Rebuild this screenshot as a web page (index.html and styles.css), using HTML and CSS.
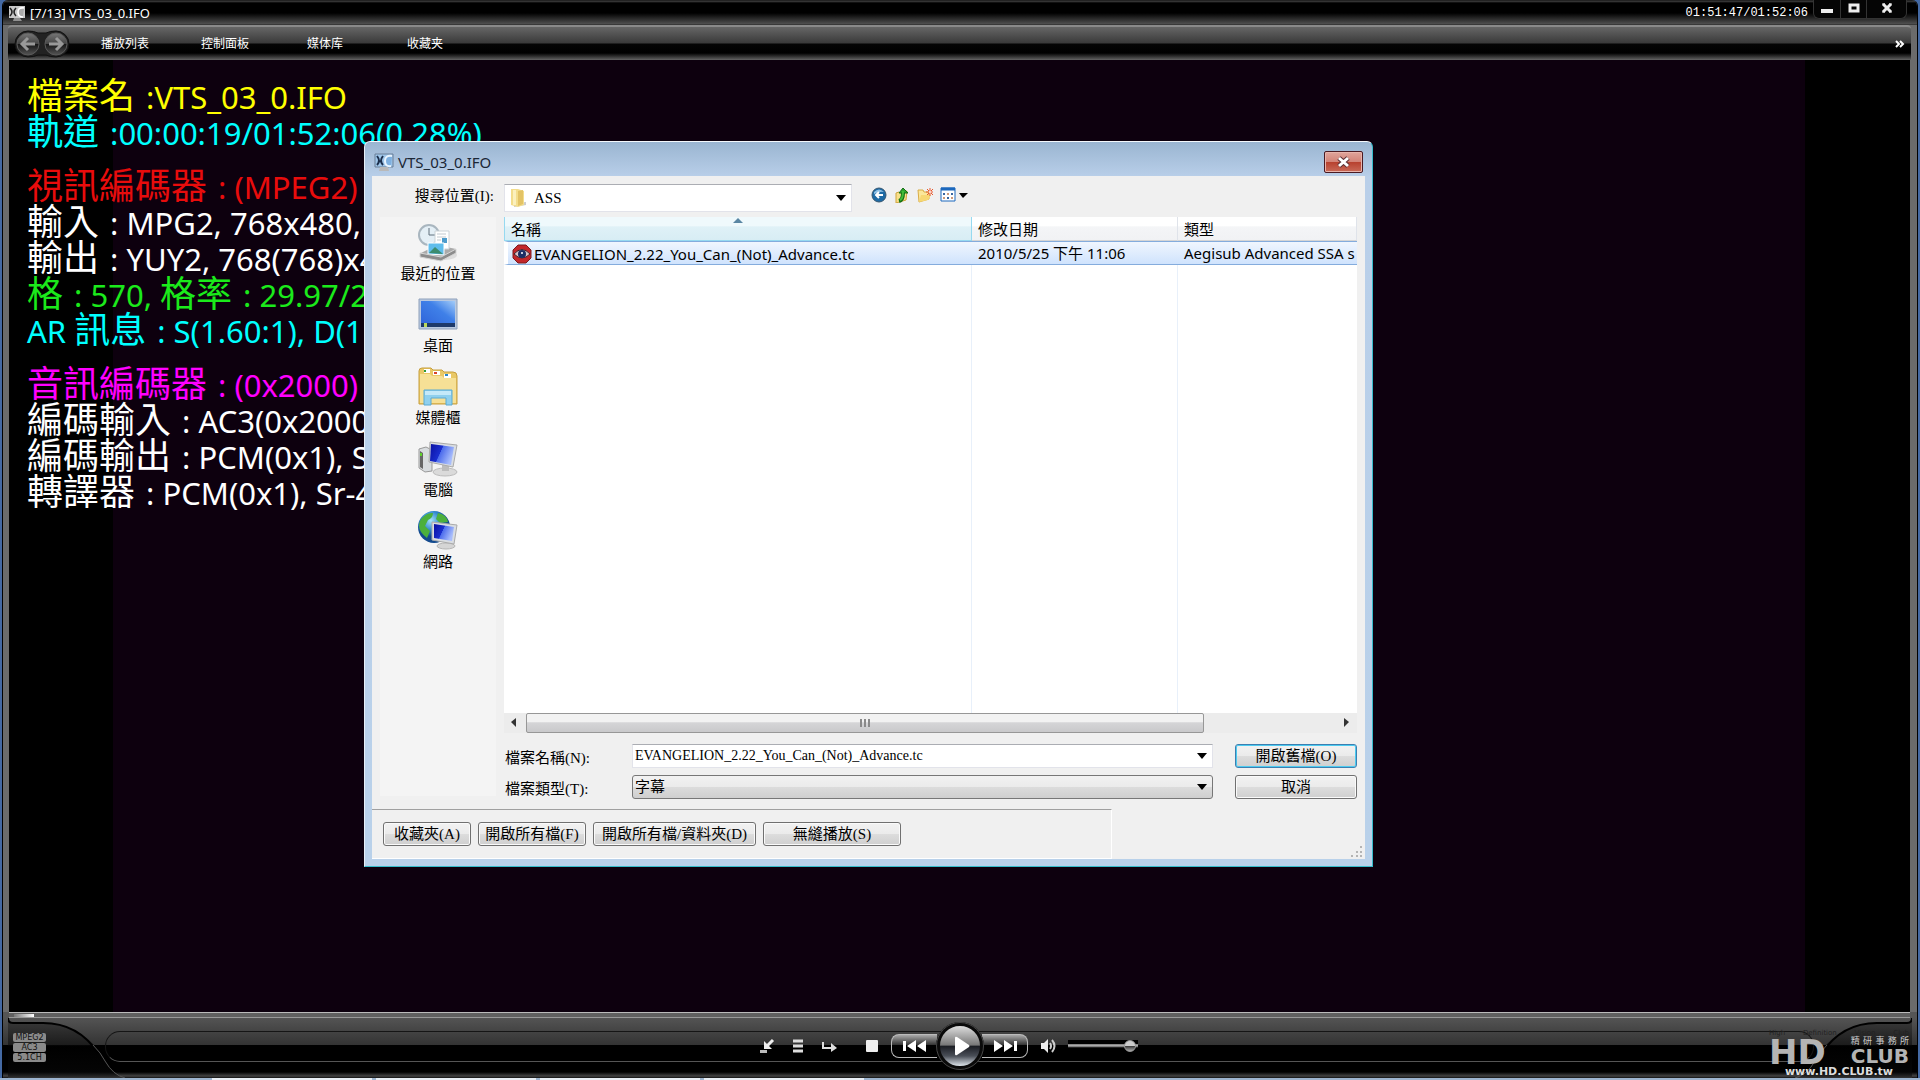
FILE: index.html
```html
<!DOCTYPE html>
<html lang="zh-Hant">
<head>
    <meta charset="UTF-8">
    <meta name="viewport" content="width=device-width, initial-scale=1.0">
    <title>VTS_03_0.IFO</title>
    <link rel="stylesheet" href="styles.css">
</head>
<body>
    <div class="player">
        <header class="titlebar">
            <svg class="app-icon" width="16" height="16" viewBox="0 0 16 16">
                <path d="M0 1h16v12H0z" fill="#c9c9c9"/>
                <path d="M5 13h6l2 3H4z" fill="#909090"/>
                <path d="M1 3q4 4 0 8M7 3q-4 4 0 8" stroke="#222" stroke-width="1.6" fill="none"/>
                <path d="M15 3q-6-1-6 4t5 5" stroke="#fff" stroke-width="1.6" fill="#aaa"/>
            </svg>
            <h1>[7/13] VTS_03_0.IFO</h1>
            <span class="clock">01:51:47/01:52:06</span>
            <div class="window-buttons">
                <button type="button" aria-label="Minimize">
                    <svg width="12" height="12" viewBox="0 0 12 12"><path d="M0 6h12v4H0z" fill="#eee"/></svg>
                </button>
                <button type="button" aria-label="Maximize">
                    <svg width="12" height="12" viewBox="0 0 12 12"><path d="M2 2h8v6H2z" fill="none" stroke="#eee" stroke-width="3"/></svg>
                </button>
                <button type="button" class="wide" aria-label="Close">
                    <svg width="12" height="12" viewBox="0 0 12 12"><path d="M2 1l8 8M10 1l-8 8" stroke="#eee" stroke-width="3"/><path d="M1 1h3M8 1h3M1 9h3M8 9h3" stroke="#eee" stroke-width="1"/></svg>
                </button>
            </div>
        </header>

        <nav class="menubar">
            <div class="history">
                <svg width="56" height="28" viewBox="0 0 56 28">
                    <defs>
                        <linearGradient id="ball" x1="0" y1="0" x2="0" y2="1">
                            <stop offset="0" stop-color="#777"/>
                            <stop offset=".5" stop-color="#444"/>
                            <stop offset=".51" stop-color="#161616"/>
                            <stop offset="1" stop-color="#555"/>
                        </linearGradient>
                    </defs>
                    <path d="M14 1q6 0 10 2h8q4-2 10-2a13 13 0 0 1 0 26q-6 0-10-2h-8q-4 2-10 2a13 13 0 0 1 0-26z" fill="#222" stroke="#111"/>
                    <circle cx="14" cy="14" r="11" fill="url(#ball)" stroke="#5a5a5a"/>
                    <circle cx="42" cy="14" r="11" fill="url(#ball)" stroke="#5a5a5a"/>
                    <path d="M21 14H9M14 8l-6 6 6 6M35 14h12M42 8l6 6-6 6" stroke="#999" stroke-width="3" fill="none"/>
                </svg>
            </div>
            <a href="#">播放列表</a>
            <a href="#">控制面板</a>
            <a href="#">媒体库</a>
            <a href="#">收藏夹</a>
            <svg class="more" width="10" height="8" viewBox="0 0 10 8"><path d="M1 1l3 3-3 3M5 1l3 3-3 3" stroke="#fff" stroke-width="2" fill="none"/></svg>
        </nav>

        <main class="video">
            <div class="osd">
                <p class="yellow"><span>檔案名</span> :VTS_03_0.IFO</p>
                <p class="cyan"><span>軌道</span> :00:00:19/01:52:06(0.28%)</p>
                <p class="red gap"><span>視訊編碼器</span> : (MPEG2) M</p>
                <p><span>輸入</span> : MPG2, 768x480,</p>
                <p><span>輸出</span> : YUY2, 768(768)x4</p>
                <p class="green"><span>格</span> : 570, <span>格率</span> : 29.97/29</p>
                <p class="cyan">AR <span>訊息</span> : S(1.60:1), D(1.</p>
                <p class="magenta gap"><span>音訊編碼器</span> : (0x2000)</p>
                <p><span>編碼輸入</span> : AC3(0x2000)</p>
                <p><span>編碼輸出</span> : PCM(0x1), Sr</p>
                <p><span>轉譯器</span> : PCM(0x1), Sr-48</p>
            </div>
        </main>

        <footer class="controls">
            <div class="seek"><div class="seek-thumb"></div></div>
            <div class="groove"></div>
            <svg class="corner" width="130" height="60" viewBox="0 0 130 60">
                <defs>
                    <linearGradient id="shade" x1="0" y1="0" x2="0" y2="1">
                        <stop offset="0" stop-color="#3c3c3c"/>
                        <stop offset=".45" stop-color="#1c1c1c"/>
                        <stop offset=".46" stop-color="#000"/>
                        <stop offset=".9" stop-color="#050505"/>
                        <stop offset="1" stop-color="#333"/>
                    </linearGradient>
                </defs>
                <path d="M0 0q0 5 5 5h30q35 0 58 30 12 22 24 25H0z" fill="url(#shade)"/>
                <path d="M0 0q0 5 5 5h30q35 0 55 30" fill="none" stroke="#000" stroke-width="2"/>
                <path d="M85 27q8 8 12 16 8 14 20 17" fill="none" stroke="#555"/>
            </svg>
            <svg class="corner right" width="130" height="60" viewBox="0 0 130 60">
                <path d="M0 0q0 5 5 5h30q35 0 58 30 12 22 24 25H0z" fill="url(#shade)"/>
                <path d="M0 0q0 5 5 5h30q35 0 55 30" fill="none" stroke="#000" stroke-width="2"/>
                <path d="M85 27q8 8 12 16 8 14 20 17" fill="none" stroke="#555"/>
            </svg>
            <ul class="codec">
                <li>MPEG2</li>
                <li>AC3</li>
                <li>5.1CH</li>
            </ul>
            <div class="transport">
                <div class="side left">
                    <button type="button" aria-label="Shrink"><svg width="16" height="16" viewBox="0 0 16 16"><path d="M14 2L8 8" stroke="#eee" stroke-width="3"/><path d="M5 3v8h8z" fill="#eee"/><path d="M1 12h7v3H1z" fill="#bbb"/></svg></button>
                    <button type="button" aria-label="Playlist"><svg width="16" height="16" viewBox="0 0 16 16"><path d="M3 3h10M3 8h10M3 13h10" stroke="#ddd" stroke-width="3"/></svg></button>
                    <button type="button" class="spaced" aria-label="Next in order"><svg width="16" height="16" viewBox="0 0 16 16"><path d="M2 4v6h9" stroke="#ddd" stroke-width="2" fill="none"/><path d="M10 5l6 5-6 4z" fill="#ddd"/></svg></button>
                    <button type="button" aria-label="Stop"><svg width="16" height="16" viewBox="0 0 16 16"><rect x="2" y="2" width="12" height="12" rx="1" fill="#eee"/></svg></button>
                    <button type="button" class="skip prev" aria-label="Previous"><svg width="24" height="12" viewBox="0 0 24 12"><path d="M0 1h3v10H0zM13 0v12L4 6zM23 0v12l-9-6z" fill="#fff"/></svg></button>
                </div>
                <button type="button" class="play" aria-label="Play"><svg width="16" height="20" viewBox="0 0 16 20"><path d="M1 2q0-2 2-1l12 8q1 1 0 2L3 19q-2 1-2-1z" fill="#fff"/></svg></button>
                <div class="side">
                    <button type="button" class="skip next" aria-label="Next"><svg width="24" height="12" viewBox="0 0 24 12"><path d="M21 1h3v10h-3zM11 0v12l9-6zM1 0v12l9-6z" fill="#fff"/></svg></button>
                    <button type="button" aria-label="Mute"><svg width="16" height="16" viewBox="0 0 16 16"><path d="M1 5h3l4-4v14l-4-4H1z" fill="#eee"/><path d="M10 5q2 3 0 6M12 2q5 6 0 12" stroke="#ccc" stroke-width="2" fill="none"/></svg></button>
                    <input class="volume" type="range" min="0" max="100" value="97" aria-label="Volume">
                </div>
            </div>
            <div class="brand">
                <div class="tagline"><span>High</span><span>Definition</span><span>Vision</span><span>Club</span></div>
                <div class="logo">
                    <strong>HD</strong>
                    <div>
                        <div class="office"><span>精</span><span>研</span><span>事</span><span>務</span><span>所</span></div>
                        <b>CLUB</b>
                    </div>
                </div>
                <div class="url">www.HD.CLUB.tw</div>
            </div>
        </footer>
    </div>
    <div class="taskbar"><i></i><i></i><i></i><i></i></div>

    <form class="dialog" action="#">
        <div class="dialog-title">
            <svg width="20" height="20" viewBox="0 0 20 20">
                <path d="M1 2h18v13H1z" fill="#9fc6ea" stroke="#6b7f96"/>
                <path d="M6 15h8l1 4H5z" fill="#b9b9b9"/>
                <path d="M3 4q4 5 0 9M9 4q-4 5 0 9" stroke="#1c2f4c" stroke-width="2" fill="none"/>
                <path d="M18 4q-7-1-7 5t6 5" stroke="#e8f4ff" stroke-width="2" fill="#7eb0e0"/>
            </svg>
            <h2>VTS_03_0.IFO</h2>
            <button type="button" class="close" aria-label="Close"><svg width="16" height="14" viewBox="0 0 16 14"><path d="M3 3l9 8M12 3l-9 8" stroke="#5a3036" stroke-width="5"/><path d="M3 3l9 8M12 3l-9 8" stroke="#fff" stroke-width="3"/></svg></button>
        </div>
        <div class="dialog-body">
            <div class="lookin">
                <label for="place">搜尋位置(I):</label>
                <div class="combo">
                    <svg width="18" height="20" viewBox="0 0 18 20"><path d="M4 15l12-1v3l-12 2z" fill="#ccc"/><path d="M1 1h7l6 2v14l-6 2-7-2z" fill="#f3dd8c"/><path d="M8 3l5-1v14l-5 2z" fill="#e3c366"/><path d="M3 2h3v15H3z" fill="#fbf0bd"/></svg>
                    <select id="place"><option>ASS</option></select>
                    <svg class="drop" width="10" height="6" viewBox="0 0 10 6"><path d="M0 0h10L5 6z"/></svg>
                </div>
                <div class="tools">
                    <button type="button" aria-label="Back"><svg width="16" height="16" viewBox="0 0 16 16"><circle cx="8" cy="8" r="7" fill="#1d6aa5" stroke="#36566f"/><path d="M3 5q5-5 10 0-4-1-10 2z" fill="#8fc0e4"/><path d="M12 8H5M8 5L5 8l3 3" stroke="#fff" stroke-width="2" fill="none"/></svg></button>
                    <button type="button" aria-label="Up one level"><svg width="16" height="16" viewBox="0 0 16 16"><path d="M2 6l3-1 1 1 7-2-1 9-10 3z" fill="#f8e08a" stroke="#d0a43c"/><path d="M5 14q4-1 4-8" stroke="#157015" stroke-width="4" fill="none"/><path d="M5 6l4-5 5 5z" fill="#2fa52f" stroke="#157015"/><path d="M6 13q3-1 3-9" stroke="#43bd3a" stroke-width="2" fill="none"/></svg></button>
                    <button type="button" aria-label="New folder"><svg width="16" height="16" viewBox="0 0 16 16"><path d="M1 3h5l1 2h5v7L2 15z" fill="#fbe79a" stroke="#d9ac45"/><path d="M4 8h10l-3 5-9 2z" fill="#f7d873"/><path d="M13 1v8M9 5h7M10 2l6 6M16 2l-6 6" stroke="#e8562c"/><circle cx="13" cy="5" r="1" fill="#fff"/></svg></button>
                    <button type="button" aria-label="Views"><svg width="28" height="16" viewBox="0 0 28 16"><path d="M1 1h14v13H1z" fill="#fff" stroke="#1c68bd"/><path d="M1 2h14" stroke="#1c68bd" stroke-width="3"/><path d="M3 7h2M11 7h2M7 11h2" stroke="#3a66a0" stroke-width="2"/><path d="M7 7h2M3 11h2M11 11h2" stroke="#cf9a7a" stroke-width="2"/><path d="M19 6h9l-5 5z" fill="#000"/></svg></button>
                </div>
            </div>

            <div class="columns">
                <ul class="places">
                    <li>
                        <svg width="40" height="40" viewBox="0 0 40 40"><ellipse cx="27" cy="33" rx="12" ry="5" fill="#ddd"/><circle cx="11" cy="13" r="10" fill="#e4eff6" stroke="#a9b6bf" stroke-width="2"/><path d="M11 6v7h6" stroke="#60707c" fill="none"/><path d="M3 31l16-8 19 4-15 10z" fill="#aaa"/><path d="M17 9h14v18H17z" fill="#fff" stroke="#cbd3d8"/><path d="M19 12h9M19 15h9M19 18h4" stroke="#c1c9cf"/><path d="M24 16h5v5h-5z" fill="#4d9ccc"/><path d="M10 21h16v12l-16-1z" fill="#5fbdec" stroke="#fff"/><path d="M11 31l6-6 8 7z" fill="#3c8c6e"/><path d="M2 31l21 4 15-8v4l-15 8-21-4z" fill="#8c8c8c" stroke="#d5d5d5"/></svg>
                        <span>最近的位置</span>
                    </li>
                    <li>
                        <svg width="40" height="40" viewBox="0 0 40 40"><defs><linearGradient id="desk" x1="0" y1="1" x2="1" y2="0"><stop offset="0" stop-color="#2e62d8"/><stop offset=".6" stop-color="#3f80e8"/><stop offset="1" stop-color="#a3ccf8"/></linearGradient></defs><path d="M1 5h38v30H1z" fill="#b9c9e0" stroke="#8fa1bb"/><path d="M3 7h34v26H3z" fill="url(#desk)"/><path d="M3 29h34v4H3z" fill="#1e3a6a"/><path d="M6 29h3v4H6z" fill="#b9d85c"/></svg>
                        <span>桌面</span>
                    </li>
                    <li>
                        <svg width="40" height="40" viewBox="0 0 40 40"><path d="M1 5q0-3 3-3h9l2 2h9l2 2h9q4 0 4 4v28H1z" fill="#e9c866" stroke="#c79f3f"/><path d="M6 3h6v4H6zM15 5h7v4h-7zM26 8h7v4h-7z" fill="#fff"/><path d="M6 4h2v2H6z" fill="#2a9a3a"/><path d="M16 6h3v2h-3z" fill="#d9432a"/><path d="M27 8h3v2h-3z" fill="#2a86c9"/><path d="M2 8h10l2 2h10l2 2h12v25H2z" fill="#f6e096"/><path d="M6 24h28v15h-6v-7H13v7H6z" fill="#8fd0ee" stroke="#5aaad2"/><path d="M7 25h26v4H7z" fill="#c4e9f9"/></svg>
                        <span>媒體櫃</span>
                    </li>
                    <li>
                        <svg width="40" height="40" viewBox="0 0 40 40"><defs><linearGradient id="screen" x1="0" y1="0" x2="1" y2=".4"><stop offset="0" stop-color="#0a0fa0"/><stop offset=".5" stop-color="#1a2fd0"/><stop offset=".52" stop-color="#4c6cec"/><stop offset="1" stop-color="#a8bdfc"/></linearGradient></defs><path d="M1 11l7-2 6 3v21l-7 1-6-4z" fill="#d8dcdf" stroke="#999"/><path d="M2 13l3 2v16l-3-2z" fill="#666"/><path d="M2 15h2v3H2z" fill="#5fd02c"/><ellipse cx="27" cy="34" rx="12" ry="4" fill="#dadada" stroke="#bbb"/><path d="M24 27h7v6h-7z" fill="#bcbcbc"/><path d="M12 4l27 3-4 22-24-5z" fill="#d9dde2" stroke="#aaa"/><path d="M13 6l23 3-3 18-21-4z" fill="url(#screen)"/></svg>
                        <span>電腦</span>
                    </li>
                    <li>
                        <svg width="40" height="40" viewBox="0 0 40 40"><defs><radialGradient id="globe" cx=".4" cy=".3"><stop offset="0" stop-color="#a8e4fb"/><stop offset=".6" stop-color="#2f86cc"/><stop offset="1" stop-color="#134a8e"/></radialGradient></defs><circle cx="16" cy="17" r="16" fill="url(#globe)"/><path d="M3 9Q9 2 15 3q0 5-5 7l-3 6 5 5-3 7Q-3 19 3 9zM20 3q9 2 10 9l-8 1-4-4z" fill="#4cb03c"/><ellipse cx="28" cy="36" rx="9" ry="3" fill="#d5d5d5" stroke="#b5b5b5"/><path d="M14 12l25 3-3 19-22-4z" fill="#d9dde2" stroke="#aaa"/><path d="M16 14l20 3-2 14-18-3z" fill="url(#screen)"/></svg>
                        <span>網路</span>
                    </li>
                </ul>

                <div class="files">
                    <div class="list">
                        <table>
                            <thead>
                                <tr>
                                    <th class="sorted name">名稱</th>
                                    <th class="date">修改日期</th>
                                    <th>類型</th>
                                </tr>
                            </thead>
                            <tbody>
                                <tr>
                                    <td class="file"><svg width="20" height="20" viewBox="0 0 20 20"><path d="M6 1h8l5 5v8l-5 5H6l-5-5V6z" fill="#c3272b" stroke="#7a1c1e"/><path d="M2 10q8-9 16 0-8 8-16 0z" fill="#d8c4ca" stroke="#40232c"/><circle cx="10" cy="10" r="4" fill="#1c2f66"/><circle cx="10" cy="9" r="1" fill="#fff"/></svg><span>EVANGELION_2.22_You_Can_(Not)_Advance.tc</span></td>
                                    <td>2010/5/25 下午 11:06</td>
                                    <td>Aegisub Advanced SSA s</td>
                                </tr>
                            </tbody>
                        </table>
                    </div>
                    <div class="scrollbar">
                        <svg width="22" height="20" viewBox="0 0 22 20"><path d="M12 5v9l-5-5z" fill="#333"/></svg>
                        <div class="thumb"><i></i><i></i><i></i></div>
                        <svg width="22" height="20" viewBox="0 0 22 20"><path d="M9 5v9l5-5z" fill="#333"/></svg>
                    </div>
                    <div class="fields">
                        <label for="filename">檔案名稱(N):</label>
                        <div class="combo edit">
                            <input id="filename" type="text" value="EVANGELION_2.22_You_Can_(Not)_Advance.tc">
                            <svg class="drop" width="10" height="6" viewBox="0 0 10 6"><path d="M0 0h10L5 6z"/></svg>
                        </div>
                        <button type="submit" class="default">開啟舊檔(O)</button>
                        <label for="filetype">檔案類型(T):</label>
                        <div class="combo flat">
                            <select id="filetype"><option>字幕</option></select>
                            <svg class="drop" width="10" height="6" viewBox="0 0 10 6"><path d="M0 0h10L5 6z"/></svg>
                        </div>
                        <button type="button">取消</button>
                    </div>
                </div>
            </div>

            <div class="extra">
                <button type="button" class="b-fav">收藏夾(A)</button>
                <button type="button" class="b-all">開啟所有檔(F)</button>
                <button type="button" class="b-dir">開啟所有檔/資料夾(D)</button>
                <button type="button" class="b-gap">無縫播放(S)</button>
            </div>
            <svg class="grip" width="12" height="12" viewBox="0 0 12 12"><path d="M9 0h2v2H9zM5 5h2v2H5zM9 5h2v2H9zM0 9h2v2H0zM5 9h2v2H5zM9 9h2v2H9z" fill="#b4b4b4"/></svg>
        </div>
    </form>
</body>
</html>
```
FILE: styles.css
```css
* {
    box-sizing: border-box;
}

body, h1, h2, p, ul {
    margin: 0;
    padding: 0;
}

ul {
    list-style: none;
}

body {
    display: flex;
    flex-direction: column;
    height: 100vh;
    overflow: hidden;
    background-color: #4469a3;
    font-family: "Noto Sans", "Noto Sans CJK TC", sans-serif;
}

button {
    padding: 0;
    border: none;
    background: none;
    font: inherit;
    color: inherit;
}

svg {
    display: block;
    flex: none;
}

/* Player window */
.player {
    flex: 1;
    display: flex;
    flex-direction: column;
    min-height: 0;
    margin: 0 2px;
    border: solid #000;
    border-width: 0 1px;
    border-radius: 6px 6px 0 0;
    background-color: #6b6b6b;
    color: #fff;
    overflow: hidden;
}

.titlebar {
    display: flex;
    align-items: center;
    height: 25px;
    padding: 0 10px 0 6px;
    background: linear-gradient(#000 0, #444 1px, #000 3px, #000 13px, #505050 24px, #222 25px);
}

.titlebar h1 {
    flex: 1;
    margin-left: 5px;
    font-size: 13px;
    font-weight: normal;
}

.clock {
    margin-right: 5px;
    font: 12px "Liberation Mono", monospace;
}

.window-buttons {
    display: flex;
    align-self: flex-start;
    height: 19px;
    border: 1px solid #333;
    border-top: none;
    border-radius: 0 0 6px 6px;
    background-color: #050505;
}

.window-buttons button {
    display: flex;
    justify-content: center;
    align-items: center;
    width: 26px;
}

.window-buttons button + button {
    border-left: 1px solid #333;
}

.window-buttons .wide {
    width: 40px;
}

.menubar {
    display: flex;
    align-items: center;
    height: 35px;
    margin: 0 6px 0 5px;
    padding: 0 6px;
    border-top: 2px solid #8a8a8a;
    border-radius: 4px 4px 0 0;
    background: linear-gradient(#666 0, #3a3a3a 16px, #050505 17px, #000 26px, #555 32px, #666 33px);
    font-size: 12px;
}

.history {
    width: 61px;
}

.menubar a {
    width: 100px;
    padding-bottom: 2px;
    color: #fff;
    text-align: center;
    text-decoration: none;
    font-family: "Noto Sans CJK SC", sans-serif;
}

.more {
    margin-left: auto;
}

.video {
    flex: 1;
    min-height: 0;
    margin: 0 7px 0 6px;
    padding: 18px;
    background: linear-gradient(90deg, #000 104px, #0d000e 104px, #0d000e calc(100% - 105px), #000 calc(100% - 105px));
    overflow: hidden;
}

/* On screen media info */
.osd {
    font-size: 31px;
    line-height: 36px;
    white-space: nowrap;
}

.osd p {
    height: 36px;
}

.osd span {
    margin-right: 3px;
    font-size: 36px;
}

.osd .gap {
    margin-top: 18px;
}

.yellow { color: #ff0; }
.cyan { color: #0ff; }
.red { color: #e80c0c; }
.green { color: #1bea1b; }
.magenta { color: #f0f; }

/* Bottom control bar */
.controls {
    position: relative;
    height: 66px;
    background: linear-gradient(#555 5px, #333 33px, #000 33px, #000 60px, #444 64px, #111 66px);
}

.seek {
    height: 6px;
    margin: 0 7px 0 6px;
    padding: 1px 5px;
    border-top: 1px solid #bbb;
    border-bottom: 1px solid #999;
    background-color: #606060;
}

.seek-thumb {
    width: 20px;
    height: 3px;
    background: linear-gradient(90deg, #777, #fff);
}

.groove {
    height: 31px;
    margin: 13px 103px 0 102px;
    border: 1px solid #151515;
    border-bottom-color: #555;
    border-radius: 15px;
}

.corner {
    position: absolute;
    left: 5px;
    bottom: 0;
}

.corner.right {
    left: auto;
    right: 5px;
    transform: scaleX(-1);
}

.codec {
    position: absolute;
    left: 10px;
    top: 21px;
}

.codec li {
    width: 33px;
    height: 9px;
    margin-bottom: 1px;
    border-radius: 2px;
    background-color: #8a8a8a;
    color: #111;
    font: 8px/9px "DejaVu Sans", sans-serif;
    text-align: center;
}

.transport {
    position: absolute;
    left: 0;
    right: 0;
    top: 10px;
    display: grid;
    grid-template-columns: 1fr 48px 1fr;
    align-items: center;
}

.side {
    display: flex;
    align-items: center;
    gap: 12px;
}

.side.left {
    justify-content: flex-end;
    gap: 15px;
}

.spaced {
    margin-right: 12px;
}

.skip {
    display: flex;
    justify-content: center;
    align-items: center;
    width: 46px;
    height: 24px;
    margin-left: -2px;
    border: 1px solid #bbb;
    background: linear-gradient(#aaa, #333 45%, #000 46%);
}

.prev {
    margin: 0 -1px 0 -4px;
    border-right: none;
    border-radius: 8px 0 0 8px;
}

.next {
    border-left: none;
    border-radius: 0 8px 8px 0;
}

.play {
    display: flex;
    justify-content: center;
    align-items: center;
    z-index: 1;
    height: 48px;
    padding-left: 4px;
    border: 4px solid #0a0a0a;
    border-radius: 50%;
    outline: 1px solid #444;
    outline-offset: -1px;
    background: linear-gradient(#ddd, #777 48%, #1a1c22 50%, #4a4f58 75%, #dfe6ec);
}

.volume {
    appearance: none;
    width: 70px;
    height: 12px;
    margin: 0;
    background: linear-gradient(#000 4px, #777 4px, #bbb 6px, #444 7px, #000 8px);
}

.volume::-webkit-slider-thumb {
    appearance: none;
    width: 12px;
    height: 12px;
    border: 1px solid #999;
    border-radius: 50%;
    background: linear-gradient(#ccc 45%, #333 50%, #aaa);
}

.brand {
    position: absolute;
    right: 8px;
    top: 17px;
    width: 140px;
    font-family: "DejaVu Sans", "Noto Sans CJK TC", sans-serif;
    color: #b4b4b4;
}

.tagline {
    display: flex;
    justify-content: space-between;
    height: 8px;
    font-size: 7px;
    line-height: 8px;
    color: #222;
}

.logo {
    display: flex;
    justify-content: space-between;
    height: 28px;
}

.logo strong {
    font-size: 34px;
    line-height: 30px;
}

.logo b {
    display: block;
    font-size: 20px;
    line-height: 20px;
}

.office {
    display: flex;
    justify-content: space-between;
    height: 9px;
    font-size: 9px;
    line-height: 9px;
    color: #ccc;
}

.url {
    font-size: 11px;
    line-height: 13px;
    font-weight: bold;
    text-align: center;
    color: #ddd;
}

/* Slice of the taskbar below the window */
.taskbar {
    display: flex;
    gap: 4px;
    height: 2px;
    padding-left: 212px;
    background-color: #9db4cf;
}

.taskbar i {
    width: 160px;
    background-color: #e8eef5;
}

/* File dialog */
.dialog {
    position: absolute;
    left: 364px;
    top: 141px;
    width: 1009px;
    padding: 0 7px 7px;
    border: 1px solid #35bccb;
    border-top-color: #f4f8fc;
    border-left-color: #e6f0f8;
    border-radius: 6px 6px 0 0;
    background: linear-gradient(#9ab5d1, #b9cfe9 35px, #b9d1ea);
    color: #000;
    font-size: 15px;
}

.dialog-title {
    display: flex;
    align-items: center;
    height: 34px;
    padding: 6px 0 0 2px;
}

.dialog-title h2 {
    flex: 1;
    margin-left: 4px;
    font-size: 15px;
    font-weight: normal;
    color: #1b2736;
}

.close {
    display: flex;
    justify-content: center;
    align-items: center;
    width: 39px;
    height: 22px;
    margin-right: 2px;
    border: 1px solid #4a1a22;
    border-radius: 2px;
    background: linear-gradient(#e0a59c, #d38478 48%, #b7402e 50%, #c96a58);
    box-shadow: inset 0 0 0 1px #e8b4ac;
}

.dialog-body {
    position: relative;
    background-color: #f0f0f0;
}

.lookin,
.fields,
.extra {
    font-family: "Liberation Serif", "Noto Sans CJK TC", serif;
}

.lookin {
    display: flex;
    align-items: center;
    height: 41px;
}

.lookin label {
    width: 122px;
    padding-bottom: 5px;
    text-align: right;
}

.combo {
    display: flex;
    align-items: center;
    height: 24px;
    padding: 0 5px 0 0;
    border: 1px solid #e2e3ea;
    border-top-color: #abadb3;
    background-color: #fff;
}

.lookin .combo {
    width: 348px;
    height: 28px;
    margin: 2px 0 0 10px;
    padding: 0 5px;
}

.combo select,
.combo input {
    flex: 1;
    min-width: 0;
    height: 100%;
    padding: 0 2px;
    border: none;
    appearance: none;
    background: none;
    font: inherit;
    color: inherit;
}

.combo input {
    font-size: 14px;
}

.lookin select {
    padding-left: 6px;
}

.tools {
    display: flex;
    gap: 7px;
    margin-left: 19px;
    padding-bottom: 3px;
}

.columns {
    display: flex;
    gap: 8px;
    padding: 0 8px;
}

.places {
    width: 116px;
    height: 579px;
    background-color: #f4f4f4;
}

.places li {
    display: flex;
    flex-direction: column;
    align-items: center;
    height: 72px;
    padding-top: 5px;
}

.places span {
    line-height: 22px;
}

.files {
    flex: 1;
    min-width: 0;
}

.list {
    height: 496px;
    background: linear-gradient(90deg, #fff 467px, #e8f0fa 467px, #e8f0fa 468px, #fff 468px, #fff 673px, #e8f0fa 673px, #e8f0fa 674px, #fff 674px);
    overflow: hidden;
}

.list table {
    width: 100%;
    table-layout: fixed;
    border-collapse: separate;
    border-spacing: 0;
}

.list th,
.list td {
    height: 24px;
    padding: 0 0 0 6px;
    line-height: 20px;
    text-align: left;
    font-weight: normal;
    white-space: nowrap;
    overflow: hidden;
}

.list th {
    border-right: 1px solid #dfe3ea;
    border-bottom: 1px solid #d5d5d5;
    background: linear-gradient(#fff 40%, #f4f5f7 42%, #f1f2f4);
}

.list .name {
    width: 468px;
}

.list .date {
    width: 206px;
}

.list .sorted {
    position: relative;
    border-color: #96d9f0;
    border-left: 1px solid #96d9f0;
    background: linear-gradient(#eff9fc 40%, #dff1f7 42%, #d8edf4);
}

.sorted::after {
    content: "";
    position: absolute;
    left: 228px;
    top: 1px;
    border: solid transparent;
    border-width: 0 5px 5px;
    border-bottom-color: #5a86a3;
}

.list td {
    border: solid #84acdd;
    border-width: 1px 0;
    background: linear-gradient(#f0f6fe, #cfe3fd);
}

.list .file {
    padding-left: 4px;
    border-left: 4px solid #fff;
}

.file svg,
.file span {
    display: inline-block;
    vertical-align: middle;
}

.file span {
    margin-left: 2px;
}

.scrollbar {
    display: flex;
    height: 20px;
    background-color: #ececec;
}

.thumb {
    display: flex;
    justify-content: center;
    align-items: center;
    gap: 2px;
    width: 678px;
    margin-right: auto;
    border: 1px solid #979797;
    border-radius: 2px;
    background: linear-gradient(#f2f2f2 45%, #d5d5d7 48%, #c9c9cb);
}

.thumb i {
    width: 2px;
    height: 8px;
    background-color: #8a8a8a;
}

.fields {
    display: grid;
    grid-template-columns: 126px 1fr 122px;
    gap: 7px 0;
    align-items: center;
    margin-top: 11px;
}

.fields label {
    padding-left: 1px;
}

.fields .combo {
    margin: 0 22px 0 2px;
}

.fields .combo.flat {
    border: 1px solid #777;
    border-radius: 3px;
    background: linear-gradient(#f2f2f2, #ebebeb 48%, #dcdcdc 50%, #cfcfcf);
}

.fields button,
.extra button {
    height: 24px;
    border: 1px solid #707070;
    border-radius: 3px;
    background: linear-gradient(#f2f2f2, #ebebeb 48%, #dddddd 50%, #cfcfcf);
    box-shadow: inset 0 0 0 1px #fafafa;
    line-height: 20px;
}

.fields .default {
    border-color: #3c7fb1;
    box-shadow: inset 0 0 0 1px #4ccbf0;
}

.extra {
    display: flex;
    gap: 7px;
    width: 740px;
    height: 50px;
    margin-top: 10px;
    padding: 12px 11px;
    border: 1px solid #fff;
    border-top-color: #a0a0a0;
    border-left: none;
}

.b-fav { width: 88px; }
.b-all { width: 108px; }
.b-dir { width: 163px; }
.b-gap { width: 138px; }

.grip {
    position: absolute;
    right: 2px;
    bottom: 1px;
}
```
